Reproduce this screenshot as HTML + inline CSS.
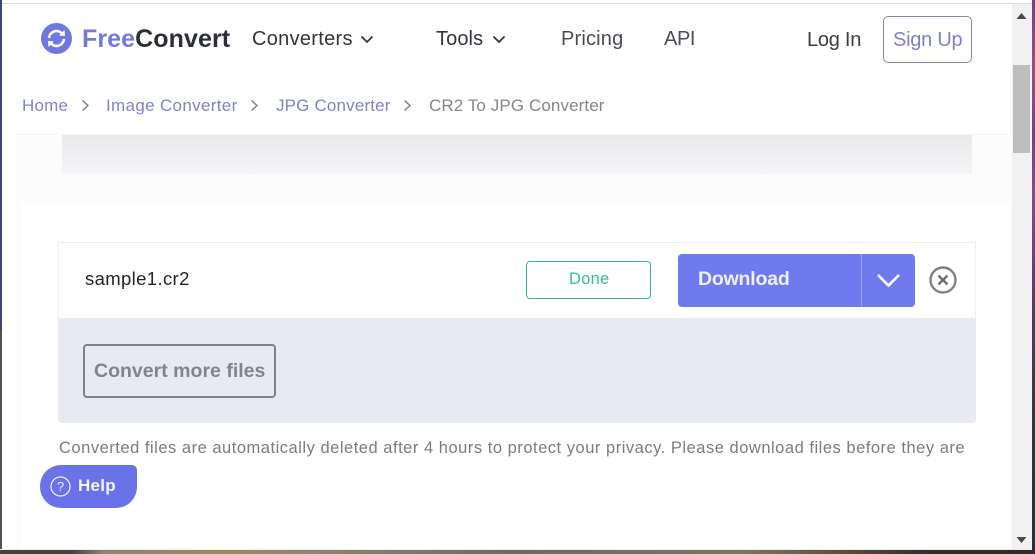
<!DOCTYPE html>
<html><head><meta charset="utf-8">
<style>
html,body{margin:0;padding:0;width:1035px;height:554px;overflow:hidden;background:#fff}
body{position:relative;font-family:"Liberation Sans",sans-serif}
.a{position:absolute}
.t{position:absolute;white-space:nowrap;line-height:24px;height:24px}
</style></head>
<body>
<!-- window edges / desktop background -->
<div class="a" style="left:1032px;top:0;width:3px;height:554px;background:linear-gradient(#7a3f80 0,#96507f 12%,#7a3f80 25%,#8a4a8a 35%,#5a3a60 55%,#3a3246 75%,#2b2b3a 100%)"></div>
<div class="a" style="left:0;top:0;width:2px;height:330px;background:#3c4478"></div>
<div class="a" style="left:0;top:330px;width:2px;height:224px;background:#55524c"></div>
<div class="a" style="left:0;top:550px;width:1035px;height:4px;background:linear-gradient(90deg,#45433f 0,#45433f 7%,#8c8577 10%,#9a8a5c 22%,#8c8577 30%,#6e6a60 50%,#7a7566 72%,#5a4a3a 82%,#2f2c2a 90%)"></div>
<div class="a" style="left:0;top:549px;width:1032px;height:1px;background:#ececec"></div>
<div class="a" style="left:2px;top:3px;width:1030px;height:1px;background:#dcdcdc"></div>

<!-- scrollbar -->
<div class="a" style="left:1012px;top:4px;width:20px;height:545px;background:#f1f0f2"></div>
<div class="a" style="left:1013px;top:65px;width:17px;height:88px;background:#bdbdbd"></div>
<svg class="a" style="left:1016px;top:12px" width="11" height="8"><path d="M0.5 7 L5.5 1 L10.5 7Z" fill="#4a4a4a"/></svg>
<svg class="a" style="left:1016px;top:536px" width="11" height="8"><path d="M0.5 1 L5.5 7 L10.5 1Z" fill="#4a4a4a"/></svg>

<!-- content backdrop -->
<div class="a" style="left:16px;top:135px;width:996px;height:414px;background:#fcfcfc"></div>
<div class="a" style="left:62px;top:135px;width:910px;height:39px;background:linear-gradient(#e9e9eb,#f5f5f7)"></div>
<div class="a" style="left:21px;top:204px;width:988px;height:345px;background:#fff"></div>

<!-- header -->
<div class="a" style="left:2px;top:4px;width:1010px;height:71px;background:#fff"></div>
<div class="a" style="left:16px;top:75px;width:992px;height:60px;background:#fff;border-top:1px solid #f8f8f8;box-sizing:border-box"></div>
<div class="a" style="left:16px;top:134px;width:992px;height:1px;background:#f3f3f3"></div>

<svg class="a" style="left:41px;top:23px" width="31" height="31" viewBox="0 0 31 31">
<circle cx="15.5" cy="15.5" r="15.5" fill="#6f78e0"/>
<path d="M8 15 A7.5 7.5 0 0 1 21 10.5" fill="none" stroke="#fff" stroke-width="2.6"/>
<path d="M23 16 A7.5 7.5 0 0 1 10 20.5" fill="none" stroke="#fff" stroke-width="2.6"/>
<path d="M18 12.5 L24 13 L23.5 7Z M13 18.5 L7 18 L7.5 24Z" fill="#fff"/>
</svg>
<div class="t" style="left:82px;top:27px;font-size:25px;font-weight:700;letter-spacing:.08px"><span style="color:#7079dc">Free</span><span style="color:#2c2f36">Convert</span></div>

<div class="t" style="left:252px;top:27px;font-size:20px;color:#33363c;letter-spacing:.3px">Converters</div>
<svg class="a" style="left:360px;top:35px" width="14" height="9"><path d="M1.5 1.5 L7 7 L12.5 1.5" fill="none" stroke="#33363c" stroke-width="1.8"/></svg>
<div class="t" style="left:436px;top:27px;font-size:20px;color:#33363c;letter-spacing:.1px">Tools</div>
<svg class="a" style="left:492px;top:35px" width="14" height="9"><path d="M1.5 1.5 L7 7 L12.5 1.5" fill="none" stroke="#33363c" stroke-width="1.8"/></svg>
<div class="t" style="left:561px;top:27px;font-size:20px;color:#4a4d53;letter-spacing:.18px">Pricing</div>
<div class="t" style="left:664px;top:27px;font-size:20px;color:#4a4d53;letter-spacing:-.4px">API</div>
<div class="t" style="left:807px;top:28px;font-size:20px;color:#3a3d42;letter-spacing:-.25px">Log In</div>
<div class="a" style="left:883px;top:16px;width:89px;height:47px;box-sizing:border-box;border:1px solid #8a86b4;border-radius:5px;background:#fff"></div>
<div class="t" style="left:893px;top:28px;font-size:20px;color:#7c80cc;letter-spacing:-.25px">Sign Up</div>

<!-- breadcrumb -->
<div class="t" style="left:22px;top:94px;font-size:17px;color:#7f83cf;letter-spacing:.2px">Home</div>
<svg class="a" style="left:81px;top:99px" width="9" height="13"><path d="M1.5 1.5 L7 6.5 L1.5 11.5" fill="none" stroke="#777" stroke-width="1.3"/></svg>
<div class="t" style="left:106px;top:94px;font-size:17px;color:#7f83cf;letter-spacing:.33px">Image Converter</div>
<svg class="a" style="left:250px;top:99px" width="9" height="13"><path d="M1.5 1.5 L7 6.5 L1.5 11.5" fill="none" stroke="#777" stroke-width="1.3"/></svg>
<div class="t" style="left:276px;top:94px;font-size:17px;color:#7f83cf;letter-spacing:.17px">JPG Converter</div>
<svg class="a" style="left:403px;top:99px" width="9" height="13"><path d="M1.5 1.5 L7 6.5 L1.5 11.5" fill="none" stroke="#777" stroke-width="1.3"/></svg>
<div class="t" style="left:429px;top:94px;font-size:17px;color:#85878c;letter-spacing:.1px">CR2 To JPG Converter</div>

<!-- file card -->
<div class="a" style="left:58px;top:242px;width:918px;height:77px;box-sizing:border-box;border:1px solid #efefef;border-bottom:none;background:#fff"></div>
<div class="a" style="left:58px;top:318px;width:918px;height:105px;background:#e8eaf3;border-radius:0 0 4px 4px"></div>
<div class="t" style="left:85px;top:267px;font-size:18.5px;color:#24262b;letter-spacing:.36px">sample1.cr2</div>
<div class="a" style="left:526px;top:261px;width:125px;height:38px;box-sizing:border-box;border:1px solid #2fbf87;border-radius:4px;background:#fff"></div>
<div class="t" style="left:569px;top:267px;font-size:16.5px;color:#36c08c;letter-spacing:.25px">Done</div>
<div class="a" style="left:678px;top:254px;width:237px;height:53px;background:#6f7aef;border-radius:4px"></div>
<div class="a" style="left:861px;top:254px;width:1px;height:53px;background:#9aa2f3"></div>
<div class="t" style="left:698px;top:267px;font-size:19.5px;font-weight:700;color:#eef0fe;letter-spacing:-.2px">Download</div>
<svg class="a" style="left:876px;top:273px" width="25" height="15"><path d="M2 2 L12.5 12.5 L23 2" fill="none" stroke="#fff" stroke-width="2.6"/></svg>
<svg class="a" style="left:929px;top:266px" width="28" height="28" viewBox="0 0 28 28"><circle cx="14" cy="14" r="12.5" fill="none" stroke="#7f8087" stroke-width="2.4"/><path d="M9.5 9.5 L18.5 18.5 M18.5 9.5 L9.5 18.5" stroke="#6f7076" stroke-width="2.4"/></svg>

<div class="a" style="left:83px;top:344px;width:193px;height:54px;box-sizing:border-box;border:2px solid #7c8090;border-radius:4px"></div>
<div class="t" style="left:94px;top:359px;font-size:19.5px;font-weight:700;color:#80848f;letter-spacing:.01px">Convert more files</div>

<div class="t" style="left:59px;top:436px;font-size:16.5px;color:#7b7d83;letter-spacing:.515px">Converted files are automatically deleted after 4 hours to protect your privacy. Please download files before they are</div>

<!-- help -->
<div class="a" style="left:40px;top:465px;width:97px;height:43px;background:#6a72ea;border-radius:21px 5px 21px 21px"></div>
<svg class="a" style="left:50px;top:476px" width="21" height="21" viewBox="0 0 21 21"><circle cx="10.5" cy="10.5" r="9.5" fill="none" stroke="#f2f3ff" stroke-width="1.2"/><text x="10.5" y="15" text-anchor="middle" font-family="Liberation Sans" font-size="13" fill="#f2f3ff">?</text></svg>
<div class="t" style="left:78px;top:474px;font-size:17px;font-weight:700;color:#f4f5ff;letter-spacing:.25px">Help</div>
</body></html>
